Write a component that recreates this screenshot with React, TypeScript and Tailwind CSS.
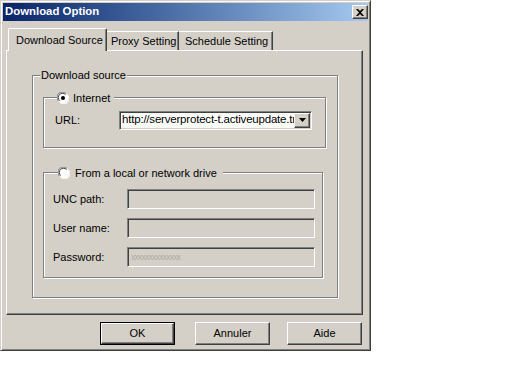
import React from 'react';

const sunken =
  'border border-t-[#808080] border-l-[#808080] border-r-white border-b-white shadow-[inset_1px_1px_0_#404040,inset_-1px_-1px_0_#d4d0c8]';
const raised =
  'border border-t-white border-l-white border-r-[#404040] border-b-[#404040] shadow-[inset_-1px_-1px_0_#808080]';
const etched = 'border border-[#808080] shadow-[inset_1px_1px_0_#ffffff,1px_1px_0_#ffffff]';

function Radio({ checked }: { checked?: boolean }) {
  return (
    <svg width="12" height="12" viewBox="0 0 12 12" className="shrink-0">
      <circle cx="6" cy="6" r="5.5" fill="#ffffff" />
      <path d="M1.5 9 A5 5 0 0 1 9 1.5" stroke="#808080" strokeWidth="1" fill="none" />
      <path d="M2.5 8.5 A4 4 0 0 1 8.5 2.5" stroke="#404040" strokeWidth="1" fill="none" />
      <path d="M10.5 3 A5 5 0 0 1 3 10.5" stroke="#ffffff" strokeWidth="1" fill="none" />
      {checked && <circle cx="6" cy="6" r="2" fill="#000000" />}
    </svg>
  );
}

function Field({ label, masked }: { label: string; masked?: boolean }) {
  return (
    <div className="flex items-center h-[20px]">
      <span className="w-[74px] text-[#000]">{label}</span>
      <div className={`w-[188px] h-[20px] bg-[#d4d0c8] ${sunken} flex items-center pl-[3px]`}>
        {masked && <span className="text-[#b0aca4] text-[9px] tracking-[-1px] leading-none">xxxxxxxxxxxxxx</span>}
      </div>
    </div>
  );
}

function Button({ label, primary }: { label: string; primary?: boolean }) {
  return (
    <div className={`w-[75px] h-[23px] ${primary ? 'border border-black' : ''}`}>
      <div className={`w-full h-full bg-[#d4d0c8] ${raised} flex items-center justify-center`}>{label}</div>
    </div>
  );
}

export default function App() {
  return (
    <div className="w-[512px] h-[384px] bg-white" style={{ fontFamily: '"Liberation Sans", Arial, sans-serif' }}>
      <div className="w-[371px] h-[351px] bg-[#d4d0c8] text-[11px] text-black border border-t-[#d4d0c8] border-l-[#d4d0c8] border-r-[#404040] border-b-[#404040] shadow-[inset_1px_1px_0_#ffffff,inset_-1px_-1px_0_#808080] p-[2px] flex flex-col">
        {/* title bar */}
        <div className="h-[18px] bg-gradient-to-r from-[#0a246a] to-[#a6caf0] flex items-center justify-between pl-[2px] pr-[0px]">
          <span className="text-white font-bold text-[11.4px]">Download Option</span>
          <div className={`w-[16px] h-[14px] bg-[#d4d0c8] ${raised} flex items-center justify-center`}>
            <svg width="8" height="7" viewBox="0 0 8 7">
              <path d="M0 0 L2 0 L4 2 L6 0 L8 0 L5 3.5 L8 7 L6 7 L4 5 L2 7 L0 7 L3 3.5 Z" fill="#000" />
            </svg>
          </div>
        </div>

        {/* tabs */}
        <div className="flex items-end h-[24px] mt-[5px] pl-[5px] relative z-10">
          <div className="w-[99px] bg-[#d4d0c8] border-l border-t border-white border-r border-r-[#404040] rounded-t-[2px] flex items-center pl-[7px] -mb-[1px] h-[23px] shadow-[inset_-1px_0_0_#808080]">
            Download Source
          </div>
          <div className="w-[72px] h-[19px] bg-[#d4d0c8] border-t border-white border-r border-r-[#404040] shadow-[inset_-1px_0_0_#808080] flex items-center pl-[4px]">
            Proxy Setting
          </div>
          <div className="w-[94px] h-[19px] bg-[#d4d0c8] border-t border-white border-r border-r-[#404040] shadow-[inset_-1px_0_0_#808080] flex items-center pl-[6px]">
            Schedule Setting
          </div>
        </div>

        {/* tab panel */}
        <div className="ml-[3px] w-[357px] h-[265px] border border-t-white border-l-white border-r-[#404040] border-b-[#404040] shadow-[inset_-1px_-1px_0_#808080] pt-[24px] pl-[25px]">
          <div className={`relative w-[306px] h-[223px] ${etched} pt-[21px] pl-[10px]`}>
            <span className="absolute -top-[8px] left-[7px] bg-[#d4d0c8] px-[1px] leading-[14px]">Download source</span>

            <div className={`relative w-[283px] h-[51px] ${etched} pt-[13px] pl-[11px]`}>
              <div className="absolute -top-[7px] left-[13px] bg-[#d4d0c8] flex items-center gap-[4px] pr-[4px] leading-[14px]">
                <Radio checked />
                <span>Internet</span>
              </div>
              <div className="flex items-center h-[18px]">
                <span className="w-[64px]">URL:</span>
                <div className={`w-[193px] h-[19px] bg-white ${sunken} flex items-center overflow-hidden`}>
                  <span className="flex-1 min-w-0 overflow-hidden whitespace-nowrap pl-[2px] text-[11.5px] tracking-[-0.2px]">http://serverprotect-t.activeupdate.tr</span>
                  <div className={`w-[16px] h-[15px] shrink-0 bg-[#d4d0c8] ${raised} flex items-center justify-center mr-[1px]`}>
                    <svg width="7" height="4" viewBox="0 0 7 4">
                      <path d="M0 0 L7 0 L3.5 4 Z" fill="#000" />
                    </svg>
                  </div>
                </div>
              </div>
            </div>

            <div className={`relative w-[280px] h-[106px] mt-[24px] ${etched} pt-[16px] pl-[9px] flex flex-col gap-[9px]`}>
              <div className="absolute -top-[7px] left-[14px] bg-[#d4d0c8] flex items-center gap-[5px] pr-[6px] leading-[14px]">
                <Radio />
                <span>From a local or network drive</span>
              </div>
              <Field label="UNC path:" />
              <Field label="User name:" />
              <Field label="Password:" masked />
            </div>
          </div>
        </div>

        {/* buttons */}
        <div className="flex justify-end gap-[20px] mt-[7px] pr-[6px]">
          <Button label="OK" primary />
          <Button label="Annuler" />
          <div className="-ml-[3px]">
            <Button label="Aide" />
          </div>
        </div>
      </div>
    </div>
  );
}
